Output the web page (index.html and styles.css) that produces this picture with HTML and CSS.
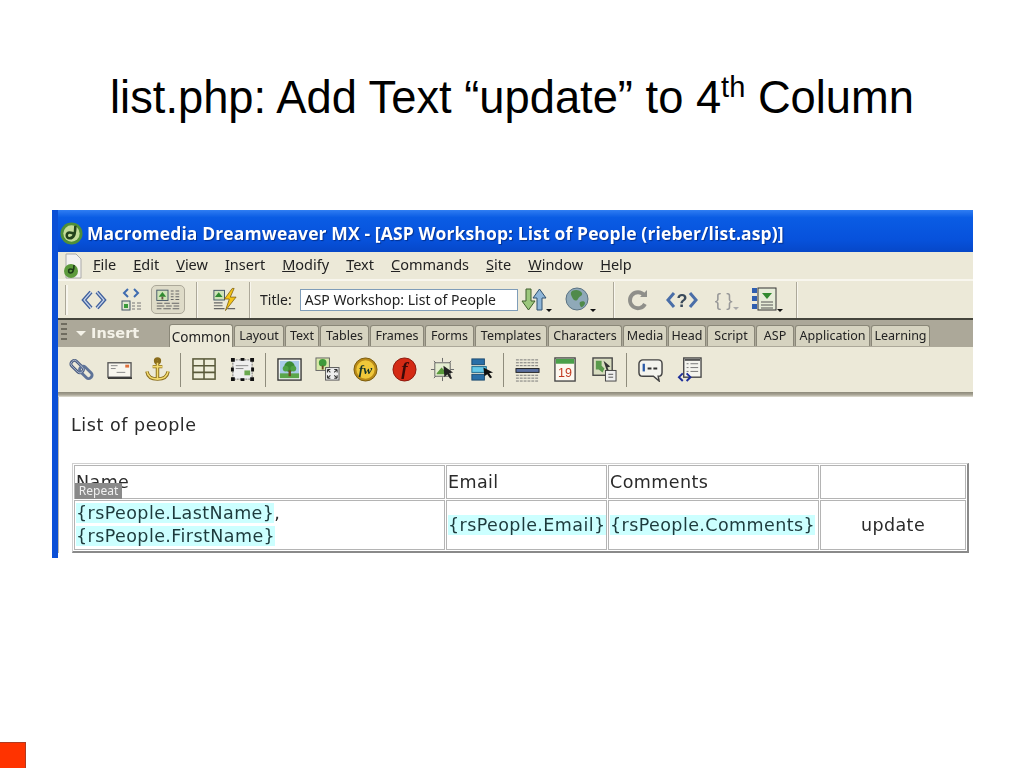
FILE: index.html
```html
<!DOCTYPE html>
<html lang="en">
<head>
<meta charset="utf-8">
<title>list.php: Add Text “update” to 4th Column</title>
<link rel="stylesheet" href="styles.css">
</head>
<body>
<h1 class="slide-title">list.php: Add Text “update” to 4<sup>th</sup> Column</h1>

<div class="window">
  <div class="titlebar">
    <svg class="app-logo" viewBox="0 0 24 24"><circle cx="12" cy="12" r="11.500" fill="#4f8f38"/><circle cx="12" cy="12" r="8.500" fill="#c4dc9a"/><path d="M16 4c0 8-1 13-6 13-4 0-4-6 0-6 3 0 4 1 5 2" fill="none" stroke="#23421c" stroke-width="2.600"/></svg>
    <span class="app-name">Macromedia Dreamweaver MX - [ASP Workshop: List of People (rieber/list.asp)]</span>
  </div>

  <div class="menubar">
    <svg class="doc-icon" viewBox="0 0 20 26"><path d="M3 1h10l5 5v19H3z" fill="#f4f2f0" stroke="#aaa"/><circle cx="8" cy="18" r="7" fill="#5d9a3c"/><path d="M11 12c0 5-1 8-3.500 8-2.500 0-2.500-4 0-4 1.500 0 2.500.5 3 1.500" fill="none" stroke="#1d3a18" stroke-width="1.600"/></svg>
    <span class="menu"><u>F</u>ile</span><span class="menu"><u>E</u>dit</span><span class="menu"><u>V</u>iew</span><span class="menu"><u>I</u>nsert</span><span class="menu"><u>M</u>odify</span><span class="menu"><u>T</u>ext</span><span class="menu"><u>C</u>ommands</span><span class="menu"><u>S</u>ite</span><span class="menu"><u>W</u>indow</span><span class="menu"><u>H</u>elp</span>
  </div>

  <div class="toolbar">
    <span class="grip"></span>
    <svg class="ti ti-code" viewBox="0 0 26 24"><path d="M10 4L3 12l7 8M16 4l7 8-7 8" fill="none" stroke="#3f5f9c" stroke-width="4"/><path d="M10 4L3 12l7 8M16 4l7 8-7 8" fill="none" stroke="#c6d4ea" stroke-width="1.200"/></svg>
    <svg class="ti ti-split" viewBox="0 0 26 24"><path d="M10 1L6 5l4 4M16 1l4 4-4 4" fill="none" stroke="#3f6cb0" stroke-width="2"/><rect x="4" y="13" width="8" height="9" fill="#dfe8d0" stroke="#456"/><rect x="6" y="16" width="4" height="4" fill="#3a9a3a"/><path d="M14 15h3M19 15h4M14 18h3M19 18h4M14 21h3M19 21h4" stroke="#777" stroke-width="1.200"/></svg>
    <span class="pressed"><svg class="ti-in" viewBox="0 0 30 24"><rect x="3" y="2" width="12" height="11" fill="#cfe3b8" stroke="#456"/><path d="M9 4l4 5H5z" fill="#2f8a2f"/><rect x="8" y="9" width="2" height="3" fill="#654"/><path d="M18 3h3M23 3h4M18 6h3M23 6h4M18 9h3M23 9h4M18 12h3M23 12h4M3 16h6M11 16h6M19 16h8M3 19h8M13 19h6M21 19h6M3 22h5M10 22h8M20 22h7" stroke="#666" stroke-width="1.100"/></svg></span>
    <span class="tsep tsep-a"></span>
    <svg class="ti ti-live" viewBox="0 0 28 26"><rect x="3" y="3" width="11" height="10" fill="#cfe3b8" stroke="#456"/><path d="M8 5l4 5H4z" fill="#2f8a2f"/><path d="M3 16h9M3 19h9M3 22h11M17 22h8" stroke="#666" stroke-width="1.200"/><path d="M22 1l-8 11h5l-4 12 11-14h-6l4-9z" fill="#f5c518" stroke="#7a5c10" stroke-width=".8"/></svg>
    <span class="tsep tsep-b"></span>
    <span class="title-label">Title:</span>
    <span class="title-input">ASP Workshop: List of People</span>
    <svg class="ti ti-updown" viewBox="0 0 32 26"><path d="M6 2h5v12h4l-6.500 9L2 14h4z" fill="#9cc77c" stroke="#3f5f2c"/><path d="M17 23V11h-4l6.500-9L26 11h-4v12z" fill="#8fb6d8" stroke="#2f506e"/><path d="M26 22h6l-3 3z" fill="#111"/></svg>
    <svg class="ti ti-globe" viewBox="0 0 32 26"><circle cx="13" cy="12" r="11" fill="#8fa9b8" stroke="#5a7282"/><path d="M8 4c4-2 8-1 10 2 1 3-3 3-4 6-2 3-5 1-6-2-1-2-2-4 0-6zM16 15c2-1 5-1 5 1s-3 5-4 4-2-4-1-5z" fill="#4f8a4a"/><path d="M26 22h6l-3 3z" fill="#111"/></svg>
    <span class="tsep tsep-c"></span>
    <svg class="ti ti-refresh" viewBox="0 0 24 24"><path d="M18 7a8 8 0 1 0 1 9" fill="none" stroke="#8f8f8a" stroke-width="3.800"/><path d="M14 9h7V2z" fill="#8f8f8a"/></svg>
    <svg class="ti ti-php" viewBox="0 0 34 24"><path d="M9 5l-6 7 6 7M25 5l6 7-6 7" fill="none" stroke="#4a6ea8" stroke-width="3"/><text x="17" y="19" class="ti-qmark">?</text></svg>
    <span class="braces">{ }</span><svg class="ti-caret" viewBox="0 0 8 4"><path d="M0 0h8L4 4z" fill="#aaa"/></svg>
    <svg class="ti ti-view" viewBox="0 0 32 26"><rect x="1" y="1" width="5" height="5" fill="#2f5fb0"/><rect x="1" y="9" width="5" height="5" fill="#2f5fb0"/><rect x="1" y="17" width="5" height="5" fill="#2f5fb0"/><rect x="7" y="1" width="18" height="22" fill="#e6ecd8" stroke="#333"/><path d="M11 6h10l-5 6z" fill="#2f8a2f"/><path d="M10 15h12M10 18h12M10 21h12" stroke="#555"/><path d="M26 22h6l-3 3z" fill="#111"/></svg>
    <span class="tsep tsep-d"></span>
  </div>

  <div class="insertbar">
    <span class="dots"></span>
    <span class="insert-label"><span class="tri"></span>Insert</span>
    <div class="tabs">
      <span class="tab tab-active w-common">Common</span><span class="tab w-layout">Layout</span><span class="tab w-text">Text</span><span class="tab w-tables">Tables</span><span class="tab w-frames">Frames</span><span class="tab w-forms">Forms</span><span class="tab w-templates">Templates</span><span class="tab w-characters">Characters</span><span class="tab w-media">Media</span><span class="tab w-head">Head</span><span class="tab w-script">Script</span><span class="tab w-asp">ASP</span><span class="tab w-application">Application</span><span class="tab w-learning">Learning</span>
    </div>
  </div>

  <div class="iconbar">
    <span class="ic"><svg viewBox="0 0 26 26"><g fill="none"><rect x="1" y="6.500" width="15" height="7" rx="3" transform="rotate(45 8.500 10)" stroke="#46597e" stroke-width="3"/><rect x="10" y="12.500" width="15" height="7" rx="3" transform="rotate(45 17.500 16)" stroke="#5e7398" stroke-width="3"/><rect x="1" y="6.500" width="15" height="7" rx="3" transform="rotate(45 8.500 10)" stroke="#c8d0e0" stroke-width=".8"/></g></svg></span>
    <span class="ic"><svg viewBox="0 0 26 26"><rect x="1" y="6" width="24" height="15" fill="#f8f6ee" stroke="#555" stroke-width="1.400"/><rect x="19" y="8" width="4" height="3" fill="#e0703a"/><path d="M4 9h7M4 12h5M10 16h9" stroke="#888"/><path d="M1 22h25" stroke="#222" stroke-width="1.500"/></svg></span>
    <span class="ic"><svg viewBox="0 0 26 26"><g fill="none" stroke="#8a6d1c" stroke-width="3.600"><circle cx="13" cy="4" r="2"/><path d="M13 6v17M8 10h10M2 15c1 6 6 8 11 8s10-2 11-8"/></g><g fill="none" stroke="#f4dc70" stroke-width="1.600"><path d="M13 6v16M8 10h10M2 15c1 6 6 8 11 8s10-2 11-8"/></g></svg></span>
    <span class="isep"></span>
    <span class="ic"><svg viewBox="0 0 26 26"><rect x="1" y="2" width="23" height="21" fill="#efeeda" stroke="#5a5a3a" stroke-width="1.600"/><path d="M1 9h23M1 16h23M12.500 2v21" stroke="#5a5a3a" stroke-width="1.600"/></svg></span>
    <span class="ic"><svg viewBox="0 0 26 26"><rect x="3" y="3" width="20" height="20" fill="#eee" stroke="#777" stroke-dasharray="2 1"/><path d="M6 9h13M6 12h8" stroke="#888"/><rect x="15" y="14" width="6" height="5" fill="#6aa84f"/><path d="M1 1h4v4H1zM21 1h4v4h-4zM1 21h4v4H1zM21 21h4v4h-4zM11 1h4v3h-4zM1 11h3v4H1zM22 11h3v4h-3zM11 22h4v3h-4z" fill="#111"/></svg></span>
    <span class="isep"></span>
    <span class="ic"><svg viewBox="0 0 26 26"><rect x="1" y="2" width="24" height="22" fill="#f8f8f4" stroke="#333" stroke-width="1.400"/><rect x="3" y="4" width="20" height="18" fill="#a9cbe8"/><rect x="3" y="17" width="20" height="5" fill="#5aa64a"/><circle cx="13" cy="10" r="5.500" fill="#3a8c34"/><circle cx="9" cy="12" r="3" fill="#4ea144"/><circle cx="17" cy="12" r="3" fill="#4ea144"/><rect x="12" y="14" width="2.500" height="6" fill="#6b4a22"/></svg></span>
    <span class="ic"><svg viewBox="0 0 26 26"><rect x="1" y="1" width="14" height="13" fill="#d8e8a8" stroke="#666"/><circle cx="8" cy="6" r="4" fill="#3f9a3a"/><rect x="7" y="9" width="2" height="4" fill="#6b4a22"/><rect x="11" y="11" width="14" height="13" fill="#eee" stroke="#555"/><path d="M13 13l3 3M13 13h3M13 13v3M23 22l-3-3M23 22h-3M23 22v-3M23 13l-3 3M23 13h-3M23 13v3M13 22l3-3M13 22h3M13 22v-3" stroke="#333" stroke-width="1.100"/></svg></span>
    <span class="ic"><svg viewBox="0 0 26 26"><circle cx="13" cy="13" r="12" fill="#b98a18" stroke="#7a5c10"/><circle cx="13" cy="13" r="9.500" fill="#f0c83a"/><text x="13" y="18" class="ic-fw">fw</text></svg></span>
    <span class="ic"><svg viewBox="0 0 26 26"><circle cx="13" cy="13" r="12" fill="#d42a14" stroke="#8a1a10"/><text x="13" y="19" class="ic-fl">f</text></svg></span>
    <span class="ic"><svg viewBox="0 0 26 26"><path d="M13 1v4M13 21v4M1 13h4M21 13h4M4 4l3 3M22 4l-3 3M4 22l3-3M22 22l-3-3" stroke="#666"/><rect x="5" y="6" width="16" height="14" fill="#e4edd0" stroke="#666"/><path d="M7 17l5-6 4 4 3-2v5H7z" fill="#5a9a3c"/><path d="M14 9l10 7-4 1 3 5-2 1-3-5-3 3z" fill="#222"/></svg></span>
    <span class="ic"><svg viewBox="0 0 26 26"><rect x="3" y="2" width="13" height="6" fill="#2a6fa8" stroke="#1d4a6e"/><rect x="3" y="10" width="15" height="6" fill="#66c8e8" stroke="#1d6a8e"/><rect x="3" y="18" width="13" height="6" fill="#2a6fa8" stroke="#1d4a6e"/><path d="M15 11l10 5-4 1 3 4-2 1-3-4-3 2z" fill="#111"/></svg></span>
    <span class="isep"></span>
    <span class="ic"><svg viewBox="0 0 26 26"><path d="M1 3h24M1 6h24M1 9h24M1 19h24M1 22h24M1 25h24" stroke="#777" stroke-dasharray="3 1"/><rect x="1" y="12" width="24" height="4" fill="#5a6fa0" stroke="#222"/></svg></span>
    <span class="ic"><svg viewBox="0 0 26 26"><rect x="2" y="1" width="21" height="24" fill="#fdf8f0" stroke="#444" stroke-width="1.400"/><rect x="3" y="2" width="19" height="5" fill="#4aa04a"/><text x="12.500" y="21" class="ic-date">19</text></svg></span>
    <span class="ic"><svg viewBox="0 0 26 26"><rect x="1" y="1" width="20" height="18" fill="#d8dcc0" stroke="#444" stroke-width="1.400"/><path d="M4 4h6v5l3 3-2 4-4-3H4z" fill="#5a9a4c"/><path d="M12 4l7 6-3 1 2 4-2 1z" fill="#333"/><rect x="14" y="14" width="11" height="11" fill="#eee" stroke="#444"/><path d="M17 18h5M17 21h5" stroke="#555"/></svg></span>
    <span class="isep"></span>
    <span class="ic"><svg viewBox="0 0 26 26"><path d="M5 3h16c3 0 4 2 4 4v9c0 3-2 4-4 4l1 5-6-5H5c-3 0-4-2-4-4V7c0-2 2-4 4-4z" fill="#f4f4ee" stroke="#444" stroke-width="1.500"/><path d="M6 7v8" stroke="#2a5aa8" stroke-width="2.400"/><path d="M10 12h4M16 12h4" stroke="#333" stroke-width="2"/></svg></span>
    <span class="ic"><svg viewBox="0 0 26 26"><rect x="7" y="1" width="18" height="20" fill="#f4f4ee" stroke="#444" stroke-width="1.400"/><rect x="8" y="2" width="16" height="2" fill="#555"/><path d="M10 7h2M14 7h8M10 11h2M14 11h8M10 15h2M14 15h8" stroke="#777"/><path d="M6 17l-4 4 4 4M10 17l4 4-4 4" fill="none" stroke="#1e2f9a" stroke-width="2"/></svg></span>
  </div>
  <div class="iconbar-edge"></div>

  <div class="document">
    <p class="doc-heading">List of people</p>
    <table class="people">
      <colgroup><col class="c1"><col class="c2"><col class="c3"><col class="c4"></colgroup>
      <tr class="r1">
        <td class="name-cell">Name<span class="repeat">Repeat</span></td>
        <td>Email</td>
        <td>Comments</td>
        <td></td>
      </tr>
      <tr class="r2">
        <td><span class="dyn">{rsPeople.LastName}</span>,<br><span class="dyn">{rsPeople.FirstName}</span></td>
        <td><span class="dyn">{rsPeople.Email}</span></td>
        <td><span class="dyn">{rsPeople.Comments}</span></td>
        <td class="center">update</td>
      </tr>
    </table>
  </div>
</div>

<div class="corner-mark"></div>
</body>
</html>
```
FILE: styles.css
```css
* { box-sizing: border-box; }
html, body { margin: 0; padding: 0; }
body {
  width: 1024px;
  height: 768px;
  background: #fff;
  display: flex;
  flex-direction: column;
  overflow: hidden;
  font-family: "Liberation Sans", Arial, sans-serif;
}
.slide-title {
  margin: 0;
  height: 210px;
  padding-top: 69px;
  text-align: center;
  font-size: 45.300px;
  line-height: 58px;
  font-weight: 400;
  color: #000;
}
.slide-title sup { font-size: 29px; line-height: 0; vertical-align: 16px; }

.window {
  margin-left: 52px;
  width: 921px;
  height: 348px;
  overflow: hidden;
  border-left: 6px solid #0a4fd6;
  background: #fff;
  filter: blur(0.35px);
  font-family: "Noto Sans", "Open Sans", sans-serif;
}
.titlebar {
  height: 42px;
  margin-left: -6px;
  padding: 4px 0 0 8px;
  display: flex;
  align-items: center;
  gap: 4px;
  background: linear-gradient(#2f7df2 0, #0a5ce4 18%, #0752dc 70%, #0647c8 100%);
}
.app-logo { width: 23px; height: 23px; flex: none; }
.app-name {
  font-family: "Open Sans", sans-serif;
  font-weight: 700;
  font-size: 17.500px;
  letter-spacing: .12px;
  color: #fff;
  white-space: nowrap;
  text-shadow: 1px 1px 1px #03308f;
}
.menubar {
  height: 28px;
  padding-bottom: 3px;
  background: #ece9d8;
  display: flex;
  align-items: center;
  font-size: 14.500px;
  color: #222;
  border-bottom: 1px solid #f8f6ee;
}
.doc-icon { width: 20px; height: 26px; margin-top: 3px; margin-left: 5px; margin-right: 10px; flex: none; }
.menu { margin-right: 17px; white-space: nowrap; }

.toolbar {
  height: 40px;
  background: #ece9d8;
  display: flex;
  align-items: center;
  border-top: 1px solid #f8f6ee;
  border-bottom: 2px solid #45453c;
}
.grip { width: 3px; height: 30px; margin-left: 7px; background: #f8f6ee; border-left: 1px solid #aca899; flex: none; }
.ti { flex: none; display: block; }
.ti-code { width: 26px; height: 24px; margin-left: 13px; }
.ti-split { width: 26px; height: 24px; margin-left: 11px; }
.pressed {
  width: 34px; height: 29px; margin-left: 7px;
  background: #dedbc8; border: 1px solid #aca899; border-radius: 5px;
  display: flex; align-items: center; justify-content: center; flex: none;
}
.ti-in { width: 28px; height: 23px; }
.tsep { width: 2px; height: 36px; background: #f8f6ee; border-left: 1px solid #aca899; flex: none; }
.tsep-a { margin-left: 11px; }
.ti-live { width: 27px; height: 26px; margin-left: 13px; }
.tsep-b { margin-left: 11px; }
.title-label { margin-left: 9px; font-size: 14px; color: #222; }
.title-input {
  margin-left: 8px;
  width: 218px; height: 22px;
  background: #fff;
  border: 1px solid #7f9db9;
  font-size: 14px;
  line-height: 20px;
  padding-left: 4px;
  color: #222;
  white-space: nowrap;
  flex: none;
}
.ti-updown { width: 32px; height: 26px; margin-left: 2px; }
.ti-globe { width: 32px; height: 26px; margin-left: 12px; }
.tsep-c { margin-left: 17px; }
.ti-refresh { width: 24px; height: 24px; margin-left: 11px; }
.ti-php { width: 34px; height: 24px; margin-left: 15px; }
.ti-qmark { font: 700 18px "Liberation Sans", sans-serif; fill: #3a4a5a; text-anchor: middle; }
.braces { margin-left: 16px; font: 400 19px "Liberation Sans", sans-serif; color: #999; white-space: nowrap; }
.ti-caret { width: 6px; height: 3px; margin-top: 18px; flex: none; }
.ti-view { width: 32px; height: 26px; margin-left: 12px; }
.tsep-d { margin-left: 13px; }

.insertbar {
  height: 27px;
  background: #aca899;
  display: flex;
  align-items: flex-end;
  position: relative;
}
.dots {
  width: 6px; height: 18px; margin: 0 0 6px 3px;
  background: repeating-linear-gradient(#6f6c60 0 2px, transparent 2px 5px);
  flex: none;
}
.insert-label {
  width: 93px;
  height: 26px;
  line-height: 24px;
  margin-left: 9px;
  color: #f4f2e8;
  font-family: "DejaVu Sans", sans-serif;
  font-weight: 700;
  font-size: 14.500px;
  flex: none;
}
.tri {
  display: inline-block;
  width: 0; height: 0;
  margin-right: 5px;
  vertical-align: 2px;
  border-left: 5px solid transparent;
  border-right: 5px solid transparent;
  border-top: 5px solid #f4f2e8;
}
.tabs { display: flex; align-items: flex-end; height: 26px; }
.tab {
  height: 21px;
  margin-bottom: 1px;
  margin-right: 1px;
  background: #d6d3c0;
  border: 1px solid #8a8778;
  border-bottom: none;
  border-radius: 3px 3px 0 0;
  font-size: 12.500px;
  line-height: 19px;
  text-align: center;
  color: #222;
  white-space: nowrap;
  overflow: hidden;
  flex: none;
}
.tab-active {
  height: 23px;
  margin-bottom: 0;
  background: #ece9d8;
  font-size: 13.500px;
  line-height: 22px;
  padding-top: 1px;
}
.w-common { width: 64px; }
.w-layout { width: 50px; }
.w-text { width: 34px; }
.w-tables { width: 49px; }
.w-frames { width: 54px; }
.w-forms { width: 49px; }
.w-templates { width: 72px; }
.w-characters { width: 74px; }
.w-media { width: 44px; }
.w-head { width: 38px; }
.w-script { width: 48px; }
.w-asp { width: 38px; }
.w-application { width: 75px; }
.w-learning { width: 59px; }

.iconbar {
  height: 45px;
  background: #ece9d8;
  display: flex;
  align-items: center;
  padding-left: 4px;
}
.ic { width: 38.400px; display: flex; justify-content: center; flex: none; }
.ic svg { width: 25px; height: 25px; display: block; }
.ic-fw { font: italic 700 14px "Liberation Serif", serif; fill: #14342a; text-anchor: middle; }
.ic-fl { font: italic 700 20px "Liberation Serif", serif; fill: #3a0a08; text-anchor: middle; }
.ic-date { font: 400 13px "Liberation Sans", sans-serif; fill: #c23a20; text-anchor: middle; }
.isep { width: 1px; height: 34px; margin: 0 4px 0 3px; background: #8f8c7c; flex: none; }
.iconbar-edge { height: 5px; background: linear-gradient(#8c897a, #aca899 60%, #e4e2d8); }

.document {
  border-left: 1px solid #b8b8b0;
  padding: 17px 0 0 12px;
  font-family: "DejaVu Sans", sans-serif;
  font-size: 17.500px;
  letter-spacing: .42px;
  color: #2a2a2a;
}
.doc-heading { margin: 0 0 27px; line-height: 22px; white-space: nowrap; letter-spacing: .55px; }
.people {
  width: 897px;
  margin-left: 1px;
  table-layout: fixed;
  border-collapse: separate;
  border-spacing: 1px;
  border-style: solid;
  border-width: 1px 2px 2px 1px;
  border-color: #d0d0d0 #8a8a8a #8a8a8a #d0d0d0;
}
.people td {
  border: 1px solid #b4b4b4;
  padding: 0 1px;
  line-height: 23px;
  vertical-align: middle;
  white-space: nowrap;
}
.c1 { width: 371px; }
.c2 { width: 161px; }
.c3 { width: 211px; }
.r1 td { height: 34px; }
.r2 td { height: 50px; }
.name-cell { position: relative; }
.repeat {
  position: absolute;
  left: 0;
  bottom: -1px;
  width: 47px;
  height: 16px;
  background: #8a8a8a;
  color: #f0f0f0;
  font: 400 12px/16px "Noto Sans", sans-serif;
  letter-spacing: 0;
  text-align: center;
}
.dyn { background: #ccffff; color: #1d3a3c; }
.people .center { text-align: center; }

.corner-mark {
  margin-top: auto;
  width: 26px;
  height: 26px;
  background: #ff3300;
  border: 1px solid #b03a20;
  border-left: none;
  border-bottom: none;
}
```
